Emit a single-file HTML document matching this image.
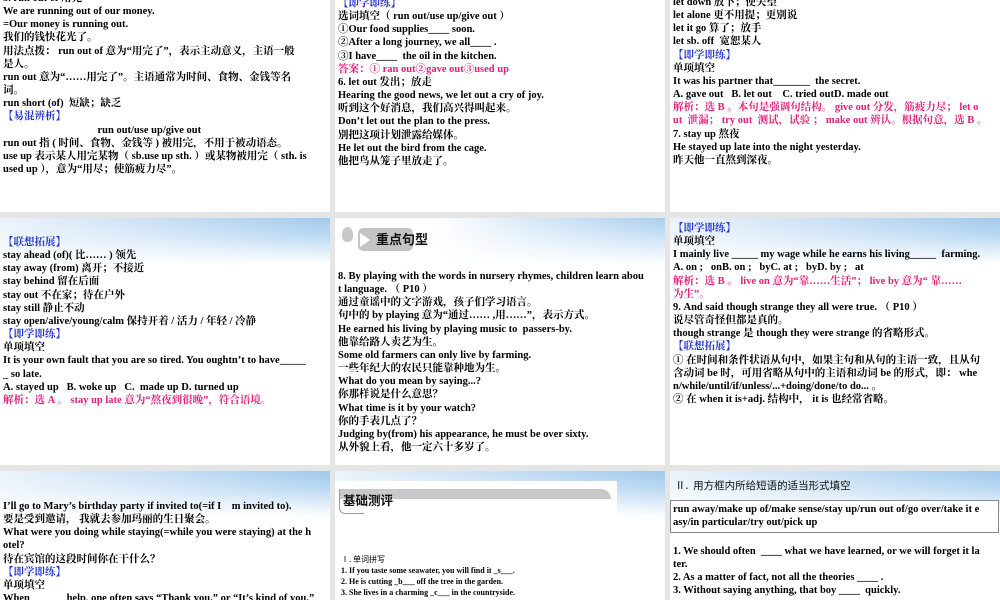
<!DOCTYPE html>
<html><head><meta charset="utf-8"><style>
body{margin:0;width:1000px;height:600px;background:#e5e5e5;position:relative;overflow:hidden;font-family:"Liberation Serif","Noto Serif CJK SC","Noto Sans CJK SC",serif;}
.p{position:absolute;background:#fff;overflow:hidden;}
.h{position:absolute;left:0;top:0;right:0;height:48px;background:linear-gradient(to bottom,rgba(255,255,255,0) 0,rgba(255,255,255,0.3) 18px,#fff 46px),linear-gradient(to right,#eaf3fb 0,#cfe3f6 40%,#9fc9ee 100%);}
.t{position:absolute;left:3px;font-size:10.5px;font-weight:bold;line-height:13.15px;white-space:nowrap;color:#000;}
.b{color:#2233cc;}
.r{color:#e0207a;}
.n{font-weight:normal;}
</style></head><body>

<div class="p" style="left:0;top:0;width:330px;height:212px">
<div class="t" style="top:-8px">5. run out of 用完<br>We are running out of our money.<br>=Our money is running out.<br>我们的钱快花光了。<br>用法点拨： run out of 意为“用完了”，表示主动意义，主语一般<br>是人。<br>run out 意为“……用完了”。主语通常为时间、食物、金钱等名<br>词。<br>run short (of)&nbsp; 短缺；缺乏<br><span class="b">【易混辨析】</span><br>&nbsp;&nbsp;&nbsp;&nbsp;&nbsp;&nbsp;&nbsp;&nbsp;&nbsp;&nbsp;&nbsp;&nbsp;&nbsp;&nbsp;&nbsp;&nbsp;&nbsp;&nbsp;&nbsp;&nbsp;&nbsp;&nbsp;&nbsp;&nbsp;&nbsp;&nbsp;&nbsp;&nbsp;&nbsp;&nbsp;&nbsp;&nbsp;&nbsp;&nbsp;&nbsp;&nbsp;run out/use up/give out<br>run out 指 ( 时间、食物、金钱等 ) 被用完，不用于被动语态。<br>use up 表示某人用完某物（ sb.use up sth. ）或某物被用完（ sth. is<br>used up ），意为“用尽；使筋疲力尽”。</div>
</div>

<div class="p" style="left:335px;top:0;width:330px;height:212px">
<div class="t" style="top:-3px"><span class="b">【即学即练】</span><br>选词填空（ run out/use up/give out ）<br>①Our food supplies____ soon.<br>②After a long journey, we all____ .<br>③I have____&nbsp; the oil in the kitchen.<br><span class="r">答案：① ran out②gave out③used up</span><br>6. let out 发出；放走<br>Hearing the good news, we let out a cry of joy.<br>听到这个好消息，我们高兴得叫起来。<br>Don’t let out the plan to the press.<br>别把这项计划泄露给媒体。<br>He let out the bird from the cage.<br>他把鸟从笼子里放走了。</div>
</div>

<div class="p" style="left:670px;top:0;width:330px;height:212px">
<div class="t" style="top:-4px">let down 放下；使失望<br>let alone 更不用提；更别说<br>let it go 算了；放手<br>let sb. off&nbsp; 宽恕某人<br><span class="b">【即学即练】</span><br>单项填空<br>It was his partner that_______&nbsp; the secret.<br>A. gave out&nbsp;&nbsp; B. let out&nbsp;&nbsp;&nbsp; C. tried outD. made out<br><span class="r">解析：选 B 。本句是强调句结构。 give out 分发，筋疲力尽； let o<br>ut&nbsp; 泄漏； try out&nbsp; 测试，试验 ； make out 辨认。根据句意，选 B 。</span><br>7. stay up 熬夜<br>He stayed up late into the night yesterday.<br>昨天他一直熬到深夜。</div>
</div>

<div class="p" style="left:0;top:218px;width:330px;height:247px">
<div class="h"></div>
<div class="t" style="top:18px"><span class="b">【联想拓展】</span><br>stay ahead (of)( 比…… ) 领先<br>stay away (from) 离开；不接近<br>stay behind 留在后面<br>stay out 不在家；待在户外<br>stay still 静止不动<br>stay open/alive/young/calm 保持开着 / 活力 / 年轻 / 冷静<br><span class="b">【即学即练】</span><br>单项填空<br>It is your own fault that you are so tired. You oughtn’t to have_____<br>_ so late.<br>A. stayed up&nbsp;&nbsp; B. woke up&nbsp;&nbsp; C.&nbsp; made up D. turned up<br><span class="r">解析：选 A 。 stay up late 意为“熬夜到很晚”，符合语境。</span></div>
</div>

<div class="p" style="left:335px;top:218px;width:330px;height:247px">
<div class="h" style="background:linear-gradient(to bottom,rgba(255,255,255,0) 0,#fff 46px),linear-gradient(to right,#fff 0,#fff 30%,#d6e8f8 60%,#a7cdef 100%)"></div>
<div style="position:absolute;left:7px;top:9px;width:11px;height:15px;border-radius:50% 50% 40% 40%;background:#c8c8c8"></div>
<div style="position:absolute;left:23px;top:10px;width:55px;height:23px;border-radius:5px;background:#c4c4c4"></div>
<div style="position:absolute;left:25px;top:15px;width:0;height:0;border-left:10px solid #fff;border-top:7px solid transparent;border-bottom:7px solid transparent"></div>
<div style="position:absolute;left:41px;top:12px;font-size:13px;font-weight:bold;font-family:'Noto Sans CJK SC',sans-serif;color:#111;line-height:18px">重点句型</div>
<div class="t" style="top:52px">8. By playing with the words in nursery rhymes, children learn abou<br>t language. （ P10 ）<br>通过童谣中的文字游戏，孩子们学习语言。<br>句中的 by playing 意为“通过…… ,用……”，表示方式。<br>He earned his living by playing music to&nbsp; passers‑by.<br>他靠给路人卖艺为生。<br>Some old farmers can only live by farming.<br>一些年纪大的农民只能靠种地为生。<br>What do you mean by saying...?<br>你那样说是什么意思？<br>What time is it by your watch?<br>你的手表几点了？<br>Judging by(from) his appearance, he must be over sixty.<br>从外貌上看，他一定六十多岁了。</div>
</div>

<div class="p" style="left:670px;top:218px;width:330px;height:247px">
<div class="h"></div>
<div class="t" style="top:4px"><span class="b">【即学即练】</span><br>单项填空<br>I mainly live _____ my wage while he earns his living_____&nbsp; farming.<br>A. on ;&nbsp;&nbsp; onB. on ;&nbsp;&nbsp; byC. at ;&nbsp;&nbsp; byD. by ;&nbsp;&nbsp; at<br><span class="r">解析：选 B 。 live on 意为“靠……生活”； live by 意为“ 靠……<br>为生”。</span><br>9. And said though strange they all were true. （ P10 ）<br>说尽管奇怪但都是真的。<br>though strange 是 though they were strange 的省略形式。<br><span class="b">【联想拓展】</span><br>① 在时间和条件状语从句中，如果主句和从句的主语一致，且从句<br>含动词 be 时，可用省略从句中的主语和动词 be 的形式，即： whe<br>n/while/until/if/unless/...+doing/done/to do... 。<br>② 在 when it is+adj. 结构中， it is 也经常省略。</div>
</div>

<div class="p" style="left:0;top:471px;width:330px;height:129px">
<div class="h"></div>
<div class="t" style="top:29px">I’ll go to Mary’s birthday party if invited to(=if I&nbsp;&nbsp;&nbsp; m invited to).<br>要是受到邀请， 我就去参加玛丽的生日聚会。<br>What were you doing while staying(=while you were staying) at the h<br>otel?<br>待在宾馆的这段时间你在干什么？<br><span class="b">【即学即练】</span><br>单项填空<br>When ______ help, one often says “Thank you.” or “It’s kind of you.”</div>
</div>

<div class="p" style="left:335px;top:471px;width:330px;height:129px">
<div class="h"></div>
<div style="position:absolute;left:0;top:10px;width:282px;height:36px;background:#fff"></div>
<div style="position:absolute;left:4px;top:18px;width:272px;height:10px;background:#c8c8c8;border-radius:0 12px 0 0"></div>
<div style="position:absolute;left:4px;top:18px;width:24px;height:24px;border-left:1px solid #999;border-bottom:1px solid #999;border-radius:0 0 0 6px"></div>
<div style="position:absolute;left:8px;top:20px;font-size:12.5px;font-weight:bold;font-family:'Noto Sans CJK SC',sans-serif;color:#111;line-height:18px">基础测评</div>
<div style="position:absolute;left:6px;top:83px;font-size:8px;line-height:11px;font-weight:bold;white-space:nowrap;font-family:'Liberation Serif','Noto Serif CJK SC',serif"><span class="n" style="font-family:'Noto Sans CJK SC',sans-serif">Ⅰ. 单词拼写</span><br>1. If you taste some seawater, you will find it _s___.<br>2. He is cutting _b___ off the tree in the garden.<br>3. She lives in a charming _c___ in the countryside.</div>
</div>

<div class="p" style="left:670px;top:471px;width:330px;height:129px">
<div class="h"></div>
<div style="position:absolute;left:5px;top:8px;font-size:10.5px;line-height:14px;white-space:nowrap;font-family:'Noto Sans CJK SC',sans-serif;color:#111">Ⅱ.&nbsp; 用方框内所给短语的适当形式填空</div>
<div style="position:absolute;left:0;top:29px;width:327px;height:31px;border:1px solid #888;background:#fff"></div>
<div class="t" style="top:32px">run away/make up of/make sense/stay up/run out of/go over/take it e<br>asy/in particular/try out/pick up</div>
<div class="t" style="top:74px">1. We should often&nbsp; ____ what we have learned, or we will forget it la<br>ter.<br>2. As a matter of fact, not all the theories ____ .<br>3. Without saying anything, that boy ____&nbsp; quickly.</div>
</div>

</body></html>
